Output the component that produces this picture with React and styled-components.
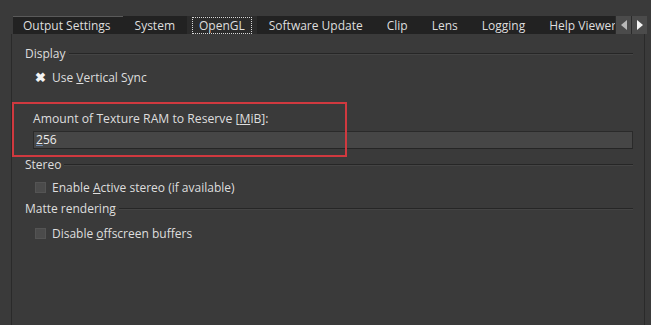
import React from "react";
import styled, { createGlobalStyle } from "styled-components";

const Global = createGlobalStyle`
  html, body {
    margin: 0;
    padding: 0;
    background: #3a3a3a;
  }
  body {
    font-family: "Open Sans", "Noto Sans", sans-serif;
    font-size: 12px;
    color: #dedede;
  }
`;

const Window = styled.div`
  width: 651px;
  height: 325px;
  box-sizing: border-box;
  padding-top: 16px;
  display: flex;
  flex-direction: column;
  overflow: hidden;
`;

const TabBar = styled.div`
  display: flex;
  margin-left: 13px;
  width: 634px;
  height: 18px;
`;

const Tabs = styled.div`
  flex: 1;
  display: flex;
  overflow: hidden;
  background: #222222;
`;

const Tab = styled.div`
  flex: none;
  box-sizing: border-box;
  padding: 0 ${(p) => (p.active ? 5 : 12)}px 0 ${(p) => (p.first ? 10 : p.active ? 5 : 12)}px;
  background: ${(p) => (p.active ? "#2b2b2b" : "#222222")};
  border-top: 1px solid ${(p) => (p.first ? "#5a5a5a" : "transparent")};
  display: flex;
  align-items: center;
  line-height: 16px;
  white-space: nowrap;
`;

const Focus = styled.span`
  border: 1px dotted #d8d8d8;
  padding: 0 6px;
  line-height: 15px;
`;

const Arrow = styled.div`
  flex: none;
  width: 15px;
  background: #4b4b4b;
  border-left: 1px solid #2a2a2a;
  display: flex;
  align-items: center;
  justify-content: center;
`;

const Panel = styled.div`
  position: relative;
  flex: 1;
  margin-left: 11px;
  width: 634px;
  box-sizing: border-box;
  border-left: 1px solid #2a2a2a;
  border-right: 1px solid #2a2a2a;
  padding: 12px 11px 0 13px;
  display: flex;
  flex-direction: column;
`;

const GroupHead = styled.div`
  display: flex;
  align-items: center;
  height: 16px;
  line-height: 16px;
  margin-top: ${(p) => p.mt || 0}px;
`;

const GroupLine = styled.div`
  flex: 1;
  height: 0;
  border-top: 1px solid #262626;
  border-bottom: 1px solid #444444;
  margin-left: 3px;
`;

const CheckRow = styled.label`
  display: flex;
  align-items: center;
  gap: 6px;
  height: 16px;
  margin: ${(p) => p.m || "0"};
  padding-left: 10px;
`;

const Box = styled.span`
  width: 9px;
  height: 9px;
  display: flex;
  align-items: center;
  justify-content: center;
  background: ${(p) => (p.checked ? "transparent" : "#4b4b4b")};
  border: 1px solid ${(p) => (p.checked ? "transparent" : "#545454")};
  color: #f4f4f4;
  font-size: 13px;
  font-weight: bold;
  line-height: 1;
`;

const Field = styled.div`
  position: relative;
  display: flex;
  flex-direction: column;
  padding: 0 0 0 8px;
  margin-top: 26px;
`;

const FieldLabel = styled.div`
  height: 16px;
  line-height: 16px;
  font-size: 12.2px;
`;

const Input = styled.div`
  margin-top: 4px;
  height: 18px;
  box-sizing: border-box;
  background: #464646;
  border: 1px solid #2a2a2a;
  border-bottom-color: #252525;
  line-height: 16px;
  padding-left: 2px;
  color: #ececec;
`;

const Caret = styled.u`
  text-decoration-color: #6a88b0;
`;

const Highlight = styled.div`
  position: absolute;
  left: -13px;
  top: -9px;
  width: 335px;
  height: 55px;
  box-sizing: border-box;
  border: 2px solid #d0393f;
  pointer-events: none;
`;

const U = styled.span`
  text-decoration: underline;
`;

const tabs = [
  { label: "Output Settings", first: true },
  { label: "System" },
  { label: "OpenGL", active: true },
  { label: "Software Update" },
  { label: "Clip" },
  { label: "Lens" },
  { label: "Logging" },
  { label: "Help Viewer" },
];

export default function App() {
  return (
    <>
      <Global />
      <Window>
        <TabBar>
          <Tabs>
            {tabs.map((t) => (
              <Tab key={t.label} active={t.active} first={t.first}>
                {t.active ? <Focus>{t.label}</Focus> : t.label}
              </Tab>
            ))}
          </Tabs>
          <Arrow>
            <svg width="6" height="10" viewBox="0 0 6 10">
              <path d="M6 0 L0 5 L6 10 Z" fill="#b8b8b8" />
            </svg>
          </Arrow>
          <Arrow>
            <svg width="6" height="10" viewBox="0 0 6 10">
              <path d="M0 0 L6 5 L0 10 Z" fill="#f4f4f4" />
            </svg>
          </Arrow>
        </TabBar>
        <Panel>
          <GroupHead>
            Display
            <GroupLine />
          </GroupHead>
          <CheckRow m="7px 0 0 0">
            <Box checked>✖</Box>
            <span>
              Use <U>V</U>ertical Sync
            </span>
          </CheckRow>
          <Field>
            <Highlight />
            <FieldLabel>
              Amount of Texture RAM to Reserve [<U>M</U>iB]:
            </FieldLabel>
            <Input>
              <Caret>2</Caret>56
            </Input>
          </Field>
          <GroupHead mt={8}>
            Stereo
            <GroupLine />
          </GroupHead>
          <CheckRow m="6px 0 0 0">
            <Box />
            <span>
              Enable <U>A</U>ctive stereo (if available)
            </span>
          </CheckRow>
          <GroupHead mt={6}>
            Matte rendering
            <GroupLine />
          </GroupHead>
          <CheckRow m="8px 0 0 0">
            <Box />
            <span>
              Disable <U>o</U>ffscreen buffers
            </span>
          </CheckRow>
        </Panel>
      </Window>
    </>
  );
}
